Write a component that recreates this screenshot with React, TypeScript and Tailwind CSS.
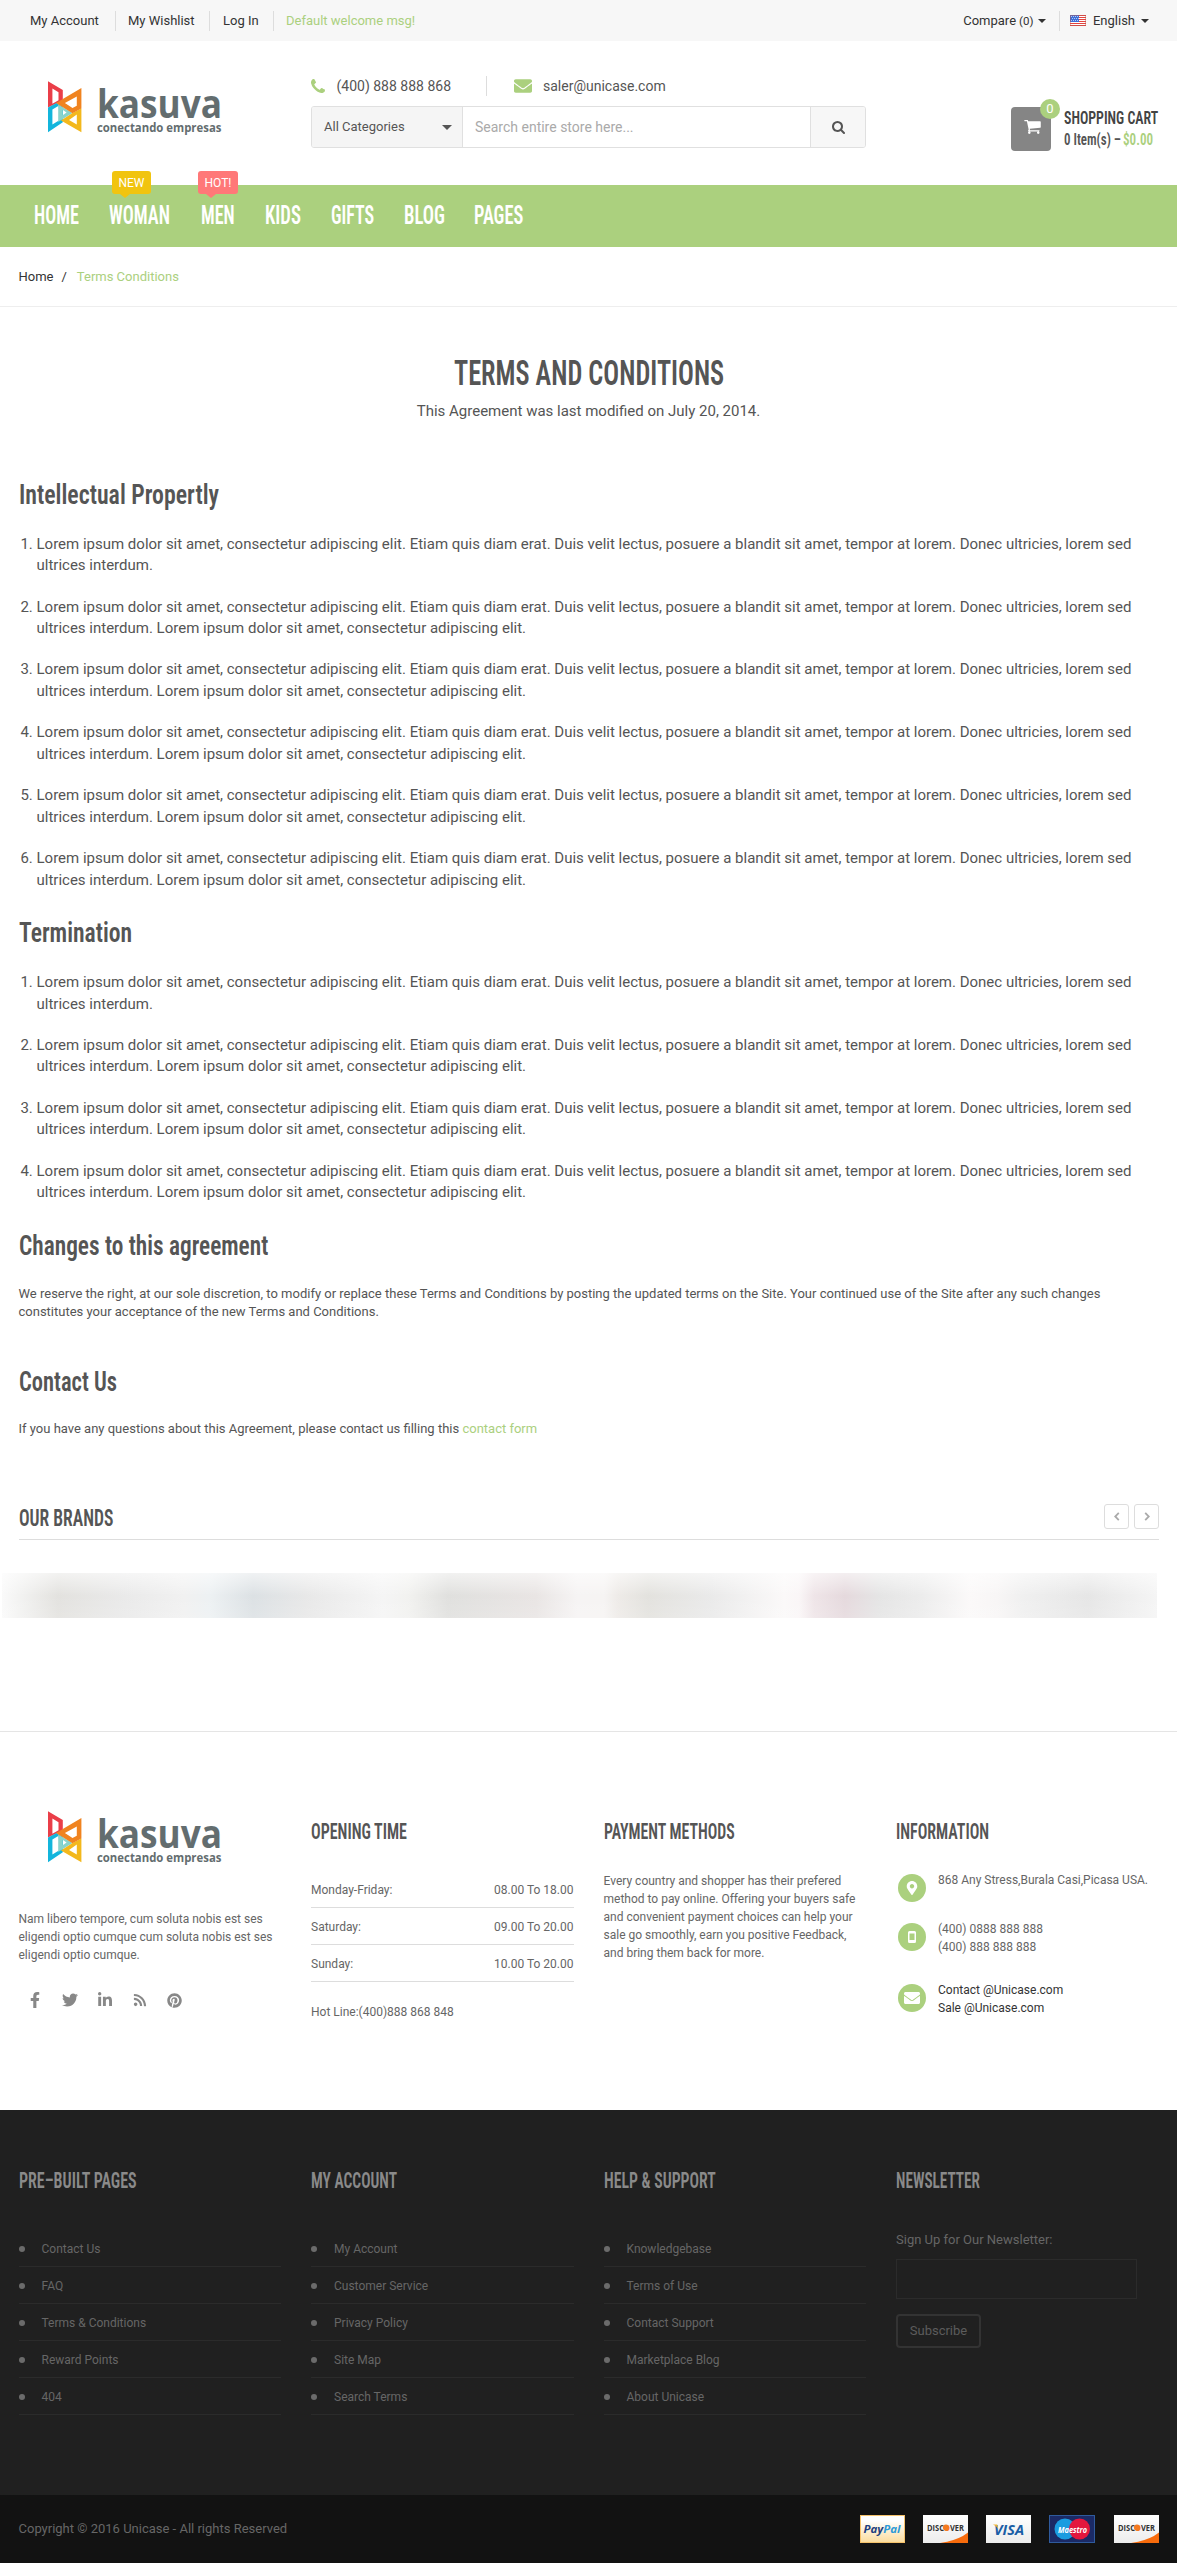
import { useLayoutEffect, useRef, useState, type ReactNode } from "react";
import { FaEnvelope, FaFacebookF, FaLinkedinIn, FaMapMarkerAlt, FaPinterest, FaRss, FaTwitter } from "react-icons/fa";

/* Condensed display text: the glyphs are squeezed to the width of their box. */
function Display({ className, children }: { className: string; children: ReactNode }) {
  const box = useRef<HTMLSpanElement>(null);
  const text = useRef<HTMLSpanElement>(null);
  const [scale, setScale] = useState(1);
  useLayoutEffect(() => {
    if (box.current && text.current) {
      setScale(box.current.clientWidth / text.current.offsetWidth);
    }
  }, []);
  return (
    <span
      ref={box}
      className={"block shrink-0 font-['Roboto_Condensed',Roboto,sans-serif] font-semibold " + className}
    >
      <span
        ref={text}
        className="inline-block origin-left align-top whitespace-nowrap"
        style={{ transform: `scaleX(${scale})` }}
      >
        {children}
      </span>
    </span>
  );
}

function Logo() {
  return (
    <div className="flex h-[52px] w-[174px] items-start">
      <svg viewBox="48 81 34 52" className="h-[52px] w-[34px] shrink-0">
        <path fill="#ea3e48" fillRule="evenodd" d="M48 81.2 62.8 90v10.3L48 107.6zM52.4 88.6v15.2l6.1-3.6v-8z" />
        <path fill="#13b5dc" fillRule="evenodd" d="M48 107.6l8.6-4.6 6.2 4v15.3L48 132.3zM52.4 109.6v15l7.3-4.6-1-14.2z" />
        <path fill="#8ad3cc" fillRule="evenodd" d="M58.2 104.5l14.3 8.5-11.2 7-3.1 2zM62.6 109.8v5.4l4-2.8z" />
        <path fill="#f3b81c" fillRule="evenodd" d="M81.4 108.6v23.7L61 120.4l11.5-7.3zM76.8 114.6l-7.8 5.4 7.8 4.6z" />
        <path fill="#f0831f" fillRule="evenodd" d="M81.4 88v20.4l-8.900 4.800L56 103zM76.800 96.400 64.900 103l7.600 5 4.300-2.200z" />
      </svg>
      <div className="ml-[14.500px] flex flex-col text-[#636d6f]">
        <Display className="mt-[4px] h-9 w-[125px] text-[40px] leading-[35px]">
          <span className="font-['Open_Sans',sans-serif] font-bold">kasuva</span>
        </Display>
        <Display className="h-[14px] w-[124px] text-[12px] leading-[14px]">
          <span className="font-['Open_Sans',sans-serif] font-bold">conectando empresas</span>
        </Display>
      </div>
    </div>
  );
}

const Caret = ({ className = "border-x-4 border-t-4" }: { className?: string }) => (
  <i className={"inline-block border-x-transparent border-t-current " + className} />
);

const Flag = () => (
  <svg viewBox="0 0 16 11" className="h-[11px] w-4">
    <rect width="16" height="11" fill="#fff" />
    <path fill="#e4443f" d="M0 0h16v1H0zM0 2h16v1H0zM0 4h16v1H0zM0 6h16v1H0zM0 8h16v1H0zM0 10h16v1H0z" />
    <rect width="9" height="7" fill="#3f6fd8" />
    <path
      stroke="#cfe0ff"
      strokeWidth=".8"
      strokeDasharray="1 1"
      d="M1 1.5h8M2 3.5h7M1 5.5h8"
    />
    <rect x=".5" y=".5" width="15" height="10" fill="none" stroke="#b9584f" strokeOpacity=".45" />
  </svg>
);

function TopBar() {
  return (
    <div className="flex h-[41px] items-center justify-between bg-[#f7f7f7] pr-7 pl-[30px] text-[13px] text-[#333]">
      <div className="flex h-5 items-center leading-5">
        <a className="w-[86px] border-r border-[#ddd]">My Account</a>
        <a className="w-[94px] border-r border-[#ddd] pl-3">My Wishlist</a>
        <a className="w-[64px] border-r border-[#ddd] pl-[13px]">Log In</a>
        <span className="pl-3 text-[#abd07e]">Default welcome msg!</span>
      </div>
      <div className="flex h-5 items-center leading-5">
        <a className="flex items-center border-r border-[#ddd] pr-[13px]">
          Compare <span className="ml-[3px] text-[11.500px]">(0)</span>
          <Caret className="ml-[5px] border-x-4 border-t-4" />
        </a>
        <a className="flex items-center pl-[10px]">
          <Flag />
          <span className="ml-[6.500px]">English</span>
          <Caret className="ml-[6px] border-x-4 border-t-4" />
        </a>
      </div>
    </div>
  );
}

function Header() {
  return (
    <header className="flex h-36 items-start text-[#555]">
      <div className="mt-10 ml-12 w-[263px]">
        <Logo />
      </div>
      <div className="w-[555px]">
        <div className="mt-[35px] flex h-5 items-center text-[14px]">
          <svg viewBox="0 0 1408 1408" className="h-[14px] w-[14px] fill-[#abd07e]">
            <path d="M1408 1112q0 27-10 70.5t-21 68.5q-21 50-122 106-94 51-186 51-27 0-53-3.5t-57.500-12.500-47-14.500-55.500-20.500-49-18q-98-35-175-83-127-79-264-216t-216-264q-48-77-83-175-3-9-18-49t-20.500-55.500-14.500-47-12.500-57.500-3.500-53q0-92 51-186 56-101 106-122 25-11 68.500-21t70.500-10q14 0 21 3 18 6 53 76 11 19 30 54t35 63.500 31 53.500q3 4 17.500 25t21.500 35.500 7 28.500q0 20-28.500 50t-62 55-62 53-28.500 46q0 9 5 22.500t8.500 20.500 14 24 11.500 19q76 137 174 235t235 174q2 1 19 11.500t24 14 20.500 8.500 22.500 5q18 0 46-28.500t53-62 55-62 50-28.500q14 0 28.500 7t35.500 21.500 25 17.500q25 15 53.500 31t63.500 35 54 30q70 35 76 53 3 7 3 21z" />
          </svg>
          <span className="ml-[11.500px] w-[150px] border-r border-[#ddd] leading-5">(400) 888 888 868</span>
          <FaEnvelope className="ml-[27px] h-[18px] w-[18px] text-[#abd07e]" />
          <span className="ml-[11.500px]">saler@unicase.com</span>
        </div>
        <div className="mt-[10px] flex h-[42px] overflow-hidden rounded-[3px] border border-[#e0e0e0]">
          <div className="flex w-[151px] items-center justify-between border-r border-[#e0e0e0] bg-[#f5f5f5] pr-[10px] pl-3 text-[13px]">
            All Categories
            <Caret className="border-x-[5px] border-t-[5px]" />
          </div>
          <input
            className="flex-1 px-3 text-[14px] outline-none placeholder:text-[#aaa]"
            placeholder="Search entire store here..."
          />
          <button className="flex w-[55px] items-center justify-center border-l border-[#e0e0e0] bg-[#f7f7f7]">
            <svg viewBox="0 0 1664 1664" className="h-[13px] w-[13px] fill-[#555]">
              <path d="M1152 704q0-185-131.500-316.500t-316.500-131.500-316.500 131.500-131.500 316.500 131.500 316.500 316.500 131.500 316.500-131.500 131.500-316.500zm512 832q0 52-38 90t-90 38q-54 0-90-38l-343-342q-179 124-399 124-143 0-273.500-55.500t-225-150-150-225-55.500-273.500 55.500-273.500 150-225 225-150 273.500-55.500 273.500 55.500 225 150 150 225 55.500 273.500q0 220-124 399l343 343q37 37 37 90z" />
            </svg>
          </button>
        </div>
      </div>
      <div className="mt-[66px] ml-[145px] flex">
        <div className="relative flex h-11 w-10 justify-center rounded-[4px] bg-[#858585]">
          <svg viewBox="0 256 1664 1408" className="mt-[13px] ml-[2px] h-[14px] w-[17px] fill-white">
            <path d="M640 1536q0 52-38 90t-90 38-90-38-38-90 38-90 90-38 90 38 38 90zm896 0q0 52-38 90t-90 38-90-38-38-90 38-90 90-38 90 38 38 90zm128-1088v512q0 24-16.500 42.500t-40.500 21.500l-1044 122q13 60 13 70 0 16-24 64h920q26 0 45 19t19 45-19 45-45 19h-1024q-26 0-45-19t-19-45q0-11 8-31.500t16-36 21.500-40 15.500-29.500l-177-823h-204q-26 0-45-19t-19-45 19-45 45-19h256q16 0 28.500 6.500t19.500 15.500 13 24.500 8 26 5.500 29.500 4.500 26h1201q26 0 45 19t19 45z" />
          </svg>
          <span className="absolute -top-2 left-[29px] flex h-5 w-5 items-center justify-center rounded-full bg-[#abd07e] text-[13px] text-white">
            0
          </span>
        </div>
        <div className="ml-[13px]">
          <Display className="h-[22px] w-[94px] text-[19px] leading-[22px] text-[#444]">SHOPPING CART</Display>
          <div className="flex">
            <Display className="h-5 w-[57px] text-[17px] leading-5">0 Item(s) –</Display>
            <Display className="ml-[2px] h-5 w-[30px] text-[17px] leading-5 text-[#abd07e]">$0.00</Display>
          </div>
        </div>
      </div>
    </header>
  );
}

function Badge({ className, children }: { className: string; children: ReactNode }) {
  return (
    <span
      className={
        "absolute -top-[29px] flex h-[23px] items-center justify-center rounded-[3px] text-[12px] text-white after:absolute after:top-[23px] after:left-[8px] after:border-x-[5px] after:border-t-4 after:border-x-transparent " +
        className
      }
    >
      {children}
    </span>
  );
}

function Nav() {
  const item = "h-[30px] text-[25.5px] leading-[30px] text-white";
  return (
    <nav className="flex h-[62px] items-start bg-[#abd07e] pt-[15px] pl-[34px]">
      <Display className={item + " w-[45px]"}>HOME</Display>
      <div className="relative ml-[30px]">
        <Display className={item + " w-[61px]"}>WOMAN</Display>
        <Badge className="left-[3px] w-[39px] bg-[#f1c40f] after:border-t-[#f1c40f]">NEW</Badge>
      </div>
      <div className="relative ml-[31px]">
        <Display className={item + " w-[34px]"}>MEN</Display>
        <Badge className="-left-[3px] w-10 bg-[#ff7878] after:border-t-[#ff7878]">HOT!</Badge>
      </div>
      <Display className={item + " ml-[30px] w-[36px]"}>KIDS</Display>
      <Display className={item + " ml-[30px] w-[43px]"}>GIFTS</Display>
      <Display className={item + " ml-[30px] w-[41px]"}>BLOG</Display>
      <Display className={item + " ml-[29px] w-[49px]"}>PAGES</Display>
    </nav>
  );
}

const LOREM =
  "Lorem ipsum dolor sit amet, consectetur adipiscing elit. Etiam quis diam erat. Duis velit lectus, posuere a blandit sit amet, tempor at lorem. Donec ultricies, lorem sed ultrices interdum.";
const LOREM_LONG = LOREM + " Lorem ipsum dolor sit amet, consectetur adipiscing elit.";

function Clauses({ count }: { count: number }) {
  return (
    <ol className="list-decimal pl-[18px] text-[15px] leading-[21.430px]">
      {Array.from({ length: count }, (_, i) => (
        <li key={i} className="mb-5">
          {i === 0 ? LOREM : LOREM_LONG}
        </li>
      ))}
    </ol>
  );
}

function Terms() {
  const heading = "h-[30px] text-[28px] leading-[30px]";
  return (
    <main className="flex h-[1197px] flex-col px-[18.500px] pt-[46.500px] text-[#555]">
      <div className="flex flex-col items-center">
        <Display className="h-10 w-[270px] text-[35px] leading-10">TERMS AND CONDITIONS</Display>
        <p className="mt-[6.500px] text-[15px] leading-[22px]">This Agreement was last modified on July 20, 2014.</p>
      </div>
      <Display className={heading + " mt-[58px] mb-[23.700px] w-[200px]"}>Intellectual Propertly</Display>
      <Clauses count={6} />
      <Display className={heading + " mt-[7px] mb-[24.200px] w-[113px]"}>Termination</Display>
      <Clauses count={4} />
      <Display className={heading + " mt-[7px] w-[249px]"}>Changes to this agreement</Display>
      <p className="mt-[24px] text-[13px] leading-[18px]">
        We reserve the right, at our sole discretion, to modify or replace these Terms and Conditions by posting the
        updated terms on the Site. Your continued use of the Site after any such changes constitutes your acceptance of
        the new Terms and Conditions.
      </p>
      <Display className={heading + " mt-[46px] w-[98px]"}>Contact Us</Display>
      <p className="mt-[23px] text-[13px] leading-[18px]">
        If you have any questions about this Agreement, please contact us filling this{" "}
        <a className="text-[#abd07e]">contact form</a>
      </p>
    </main>
  );
}

function Brands() {
  const arrow = "flex h-[25px] w-[25px] items-center justify-center rounded-[3px] border border-[#ddd]";
  return (
    <section className="h-[227px]">
      <div className="mr-[18px] ml-[19px] flex h-9 justify-between border-b border-[#ddd]">
        <Display className="mt-[3px] h-6 w-[94px] text-[23px] leading-6 text-[#555]">OUR BRANDS</Display>
        <div className="flex gap-[5px]">
          <button className={arrow}>
            <svg viewBox="0 0 6 10" className="h-[9px] w-[6px] fill-none stroke-[#aaa] stroke-2">
              <path d="M5 1 1 5l4 4" />
            </svg>
          </button>
          <button className={arrow}>
            <svg viewBox="0 0 6 10" className="h-[9px] w-[6px] fill-none stroke-[#aaa] stroke-2">
              <path d="m1 1 4 4-4 4" />
            </svg>
          </button>
        </div>
      </div>
      <div className="mt-[33px] ml-[2px] h-[45px] w-[1155px] bg-[linear-gradient(180deg,#ffffff90,#ffffff00_50%,#ffffff20),linear-gradient(90deg,#fafafa_0px,#f3f3f2_17px,#e3e2df_56px,#eaeaea_124px,#f1f1f1_182px,#edf1f3_208px,#dce1e4_251px,#e8e8e8_304px,#f5f5f5_381px,#f2f2f0_406px,#e0e0de_446px,#e9e5e4_534px,#f6f4f4_575px,#f6f4f3_602px,#eeebe8_616px,#e3e2de_646px,#eaeaea_710px,#fbf9f9_782px,#faf6f7_797px,#efe5e8_812px,#e5d9dd_843px,#e5e5e5_877px,#ececec_919px,#fbf9f9_968px,#f8f6f6_995px,#f0f0f0_1020px,#e6e6e6_1085px,#f5f5f5_1155px)]" />
    </section>
  );
}

const grid = "grid grid-cols-4 px-[3.500px]";
const title = "h-6 text-[22px] leading-6";

function InfoRow({ icon, className, children }: { icon: ReactNode; className: string; children: ReactNode }) {
  return (
    <div className={"flex items-start pl-[2px] " + className}>
      <span className="flex h-7 w-7 shrink-0 items-center justify-center rounded-full bg-[#abd07e] text-white">{icon}</span>
      <p className="-mt-[2.500px] ml-3 whitespace-pre-line">{children}</p>
    </div>
  );
}

function FooterTop() {
  const hours = [
    ["Monday-Friday:", "08.00 To 18.00"],
    ["Saturday:", "09.00 To 20.00"],
    ["Sunday:", "10.00 To 20.00"],
  ];
  const social = "flex w-[35px] justify-center";
  return (
    <section className={grid + " h-[379px] border-t border-[#e5e5e5] text-[12px] leading-[18px] text-[#666]"}>
      <div className="px-[15px] pt-[79px]">
        <div className="ml-[29.500px]">
          <Logo />
        </div>
        <p className="mt-[47px]">
          Nam libero tempore, cum soluta nobis est ses eligendi optio cumque cum soluta nobis est ses eligendi optio
          cumque.
        </p>
        <div className="mt-[26px] -ml-[1.500px] flex h-5 items-center text-[16px] text-[#888]">
          <span className={social}><FaFacebookF /></span>
          <span className={social}><FaTwitter /></span>
          <span className={social}><FaLinkedinIn /></span>
          <span className={social}><FaRss className="text-[14px]" /></span>
          <span className={social}><FaPinterest className="text-[15px]" /></span>
        </div>
      </div>
      <div className="px-[15px] pt-[88px]">
        <Display className={title + " w-[96px] text-[#555]"}>OPENING TIME</Display>
        <div className="mt-[27px]">
          {hours.map(([day, time]) => (
            <div key={day} className="flex h-[37px] items-end justify-between border-b border-[#ddd] pb-[8px]">
              <span>{day}</span>
              <span>{time}</span>
            </div>
          ))}
        </div>
        <p className="mt-[21px]">Hot Line:(400)888 868 848</p>
      </div>
      <div className="pt-[88px] pr-[10px] pl-[15px]">
        <Display className={title + " w-[131px] text-[#555]"}>PAYMENT METHODS</Display>
        <p className="mt-[28px] w-[262px]">
          Every country and shopper has their prefered method to pay online. Offering your buyers safe and convenient
          payment choices can help your sale go smoothly, earn you positive Feedback, and bring them back for more.
        </p>
      </div>
      <div className="px-[15px] pt-[88px]">
        <Display className={title + " w-[93px] text-[#555]"}>INFORMATION</Display>
        <InfoRow className="mt-[29.500px] h-[49px]" icon={<FaMapMarkerAlt className="text-[14px]" />}>
          <span className="whitespace-nowrap">868 Any Stress,Burala Casi,Picasa USA.</span>
        </InfoRow>
        <InfoRow
          className="h-[61px]"
          icon={
            <svg viewBox="0 0 8 12" className="h-3 w-2">
              <path fill="#fff" fillRule="evenodd" d="M1.500 0h5A1.500 1.500 0 0 1 8 1.500v9A1.500 1.500 0 0 1 6.500 12h-5A1.500 1.500 0 0 1 0 10.500v-9A1.500 1.500 0 0 1 1.500 0zM1.500 2.500V9h5V2.500z" />
            </svg>
          }
        >
          {"(400) 0888 888 888\n(400) 888 888 888"}
        </InfoRow>
        <InfoRow className="h-10" icon={<FaEnvelope className="text-[16px]" />}>
          <span className="text-[#333]">{"Contact @Unicase.com\nSale @Unicase.com"}</span>
        </InfoRow>
      </div>
    </section>
  );
}

function Links({ name, width, items }: { name: string; width: string; items: string[] }) {
  return (
    <div className="px-[15px] pt-[59px]">
      <Display className={title + " text-[#8a8a8a] " + width}>{name}</Display>
      <ul className="mt-[37px]">
        {items.map((t) => (
          <li key={t} className="flex h-[37px] items-end border-b border-[#2b2b2b] pb-[8px]">
            <i className="mb-[6px] h-[6px] w-[6px] rounded-full bg-[#6b6b6b]" />
            <span className="ml-[17px]">{t}</span>
          </li>
        ))}
      </ul>
    </div>
  );
}

function FooterLinks() {
  return (
    <section className={grid + " h-[385px] bg-[#202020] text-[12px] leading-[18px] text-[#666]"}>
      <Links
        name="PRE–BUILT PAGES"
        width="w-[118px]"
        items={["Contact Us", "FAQ", "Terms & Conditions", "Reward Points", "404"]}
      />
      <Links
        name="MY ACCOUNT"
        width="w-[86px]"
        items={["My Account", "Customer Service", "Privacy Policy", "Site Map", "Search Terms"]}
      />
      <Links
        name="HELP & SUPPORT"
        width="w-[112px]"
        items={["Knowledgebase", "Terms of Use", "Contact Support", "Marketplace Blog", "About Unicase"]}
      />
      <div className="px-[15px] pt-[59px]">
        <Display className={title + " w-[84px] text-[#8a8a8a]"}>NEWSLETTER</Display>
        <p className="mt-[38px] text-[13px]">Sign Up for Our Newsletter:</p>
        <input className="mt-[10px] block h-10 w-[241px] border border-[#2b2b2b] bg-transparent px-3 outline-none" />
        <button className="mt-[15px] h-[34px] w-[85px] rounded-[4px] border-2 border-[#333] text-[13px] text-[#5c5c5c]">
          Subscribe
        </button>
      </div>
    </section>
  );
}

const cardText = "font-['Open_Sans',sans-serif] font-bold";
const cardFace = "h-7 w-[45px] bg-linear-to-b from-white to-[#ececec]";

function Discover() {
  return (
    <svg viewBox="0 0 45 28" className={cardFace}>
      <path d="M45 17.500V28H17Q35 25.500 45 17.500z" fill="#f76b0c" />
      <text x="4" y="15.800" fontSize="9" textLength="37" lengthAdjust="spacingAndGlyphs" className={cardText} fill="#333">
        DISC<tspan fill="#f47a20">O</tspan>VER
      </text>
      <circle cx="23" cy="12.600" r="3.100" fill="#f47a20" />
    </svg>
  );
}

function BottomBar() {
  return (
    <div className="flex h-[68px] items-center justify-between bg-[#121212] pr-[18px] pl-[18.500px] text-[13px] text-[#666]">
      <span className="pb-[1px]">Copyright © 2016 Unicase - All rights Reserved</span>
      <div className="flex">
        <svg viewBox="0 0 45 28" className="mr-[18px] h-7 w-[45px]">
          <defs>
            <linearGradient id="cream" x2="0" y2="1">
              <stop offset=".2" stopColor="#fff" />
              <stop offset="1" stopColor="#fbdc9c" />
            </linearGradient>
          </defs>
          <rect x=".5" y=".5" width="44" height="27" fill="url(#cream)" stroke="#f5c26b" />
          <text x="3.500" y="18.300" fontSize="11" textLength="37" lengthAdjust="spacingAndGlyphs" fontStyle="italic" className={cardText} fill="#1d3f7f">
            Pay<tspan fill="#2d9ad8">Pal</tspan>
          </text>
        </svg>
        <Discover />
        <svg viewBox="0 0 45 28" className={cardFace + " mx-[18px]"}>
          <text x="8" y="19.500" fontSize="14" textLength="30" lengthAdjust="spacingAndGlyphs" fontStyle="italic" className={cardText} fill="#1a5ea6">
            VISA
          </text>
          <path d="M7 9.500h4.200l1 4.600Q10.500 10.900 7 9.500z" fill="#f2b32f" />
        </svg>
        <svg viewBox="0 0 46 28" className="mr-[19px] h-7 w-[46px]">
          <rect x=".5" y=".5" width="45" height="27" fill="#1b2a66" stroke="#2f5a9c" />
          <circle cx="16" cy="14" r="10.500" fill="#1a9ce0" />
          <circle cx="30.500" cy="14" r="10.500" fill="#e3173e" />
          <text x="9" y="17.500" fontSize="8.500" textLength="29" lengthAdjust="spacingAndGlyphs" fontStyle="italic" className={cardText} fill="#fff">
            Maestro
          </text>
        </svg>
        <Discover />
      </div>
    </div>
  );
}

export default function App() {
  return (
    <div className="w-full bg-white font-['Roboto',sans-serif]">
      <TopBar />
      <Header />
      <Nav />
      <div className="flex h-[60px] items-center border-b border-[#eee] pl-[18.500px] text-[13px] text-[#333]">
        <a>Home</a>
        <span className="ml-2">/</span>
        <span className="ml-[10px] text-[#abd07e]">Terms Conditions</span>
      </div>
      <Terms />
      <Brands />
      <FooterTop />
      <FooterLinks />
      <BottomBar />
    </div>
  );
}
